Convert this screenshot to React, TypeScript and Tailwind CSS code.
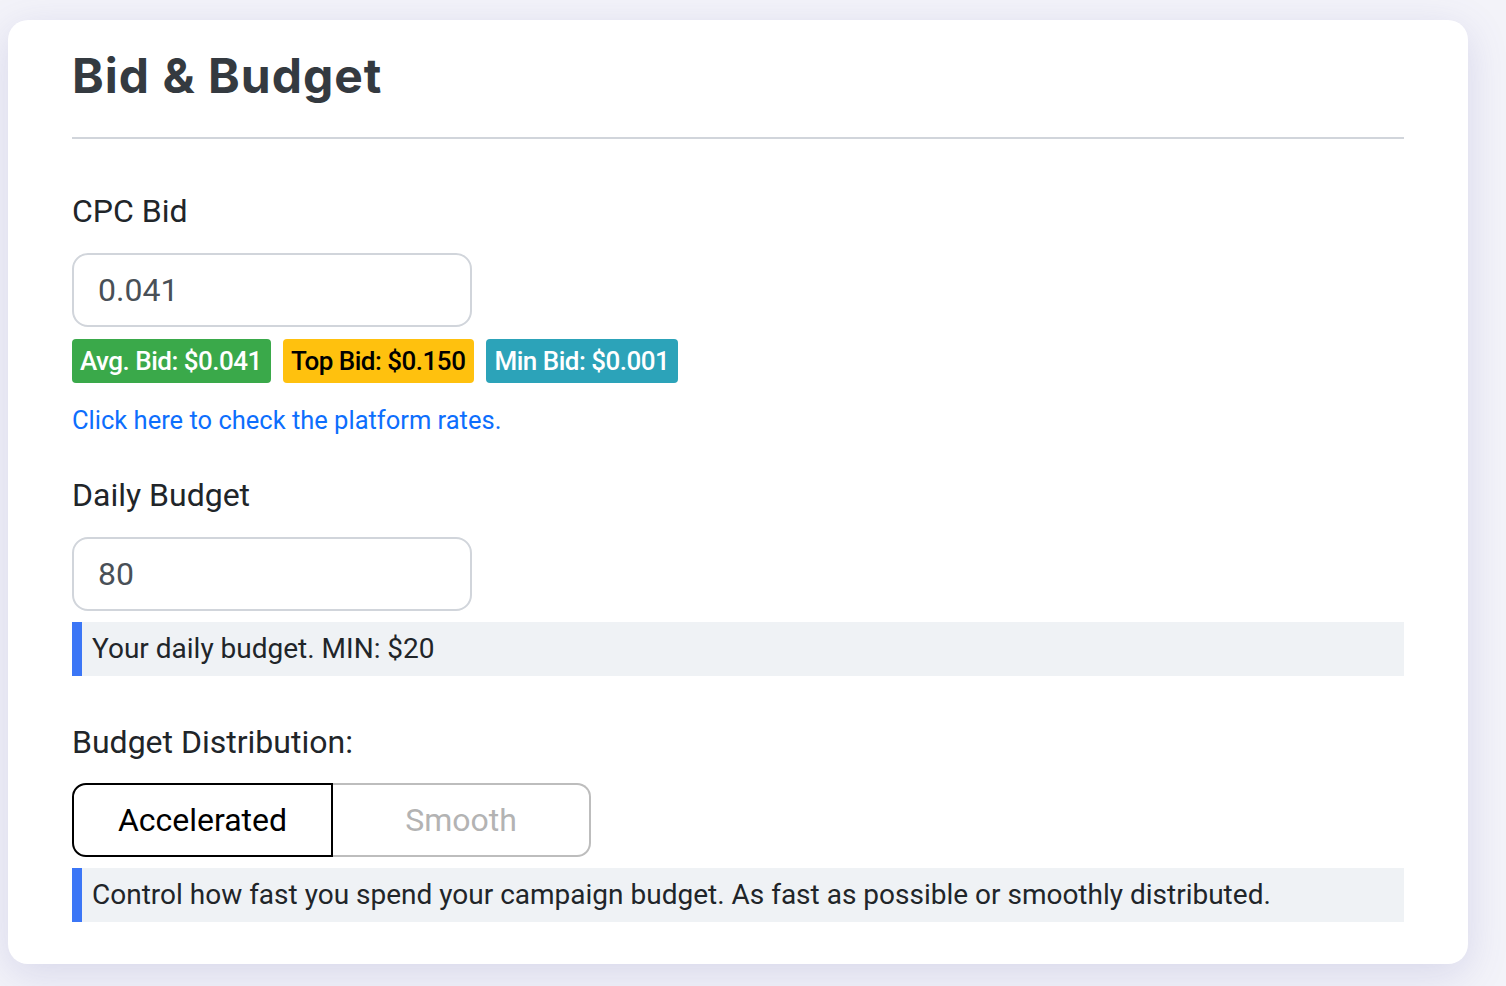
import React from "react";

const roboto = { fontFamily: "Roboto, 'Liberation Sans', sans-serif" } as const;

function Help({ children }: { children: React.ReactNode }) {
  return (
    <div className="flex h-[54px] items-center border-l-[10px] border-[#3b76f6] bg-[#eff2f5] pl-[10px] text-[28px] leading-none text-[#212529]">
      {children}
    </div>
  );
}

function Label({ children }: { children: React.ReactNode }) {
  return <div className="text-[32px] leading-none text-[#212529]">{children}</div>;
}

function Input({ value }: { value: string }) {
  return (
    <div className="flex h-[74px] w-[400px] items-center rounded-[16px] border-2 border-[#d1d5db] bg-white pl-[24px] text-[32px] leading-none text-[#495057]">
      {value}
    </div>
  );
}

export default function App() {
  return (
    <div className="min-h-[986px] w-[1506px] bg-[#f3f3f9] pl-2 pt-5" style={roboto}>
      <div className="w-[1460px] rounded-[20px] bg-white px-16 pb-[42px] pt-8 shadow-[0_10px_40px_rgba(90,90,170,0.18)]">
        <h1
          className="text-[48px] font-bold leading-none tracking-[1px] text-[#343a40]"
          style={{ fontFamily: "Inter, Lato, sans-serif" }}
        >
          Bid &amp; Budget
        </h1>
        <div className="mt-[37px] h-[2px] bg-[#d1d5db]" />

        <div className="mt-[56px]">
          <Label>CPC Bid</Label>
        </div>
        <div className="mt-[26px]">
          <Input value="0.041" />
        </div>
        <div className="mt-3 flex gap-3 text-[26px] font-medium leading-none tracking-[-0.5px]">
          <span className="flex h-[44px] items-center rounded-[4px] bg-[#3aa94a] pl-2 pr-[9px] text-white">
            Avg. Bid: $0.041
          </span>
          <span className="flex h-[44px] items-center rounded-[4px] bg-[#ffc10e] pl-2 pr-[9px] text-black">
            Top Bid: $0.150
          </span>
          <span className="flex h-[44px] items-center rounded-[4px] bg-[#2ca3b9] pl-2 pr-[9px] text-white">
            Min Bid: $0.001
          </span>
        </div>
        <div className="mt-[25px] text-[25.5px] leading-none text-[#0d6efd]">
          Click here to check the platform rates.
        </div>

        <div className="mt-[45px]">
          <Label>Daily Budget</Label>
        </div>
        <div className="mt-[26px]">
          <Input value="80" />
        </div>
        <div className="mt-[11px]">
          <Help>Your daily budget. MIN: $20</Help>
        </div>

        <div className="mt-[50px]">
          <Label>Budget Distribution:</Label>
        </div>
        <div className="mt-[25px] flex text-[32px] leading-none">
          <div className="flex h-[74px] w-[261px] items-center justify-center rounded-l-[14px] border-2 border-black text-black">
            Accelerated
          </div>
          <div className="flex h-[74px] w-[258px] items-center justify-center rounded-r-[14px] border-y-2 border-r-2 border-[#bdbdbd] text-[#b3b3b3]">
            Smooth
          </div>
        </div>
        <div className="mt-[11px]">
          <Help>
            Control how fast you spend your campaign budget. As fast as possible or smoothly distributed.
          </Help>
        </div>
      </div>
    </div>
  );
}
